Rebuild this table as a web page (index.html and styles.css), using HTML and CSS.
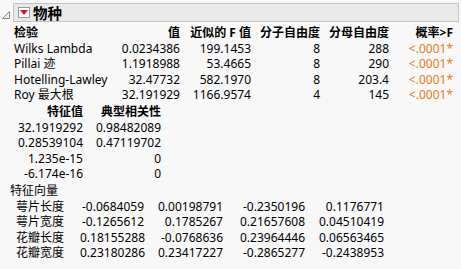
FILE: index.html
```html
<!DOCTYPE html>
<html lang="zh">
<head>
<meta charset="utf-8">
<link rel="stylesheet" href="styles.css">
</head>
<body>
<div class="report">
  <div class="outline">
    <svg class="disclose" width="10" height="10" viewBox="0 0 10 10"><polygon points="8.5,1.5 8.5,8.5 1.5,8.5" fill="none" stroke="#8a8a8a" stroke-width="1"/></svg>
    <div class="titlebar">
      <span class="redbtn"><svg width="8" height="5" viewBox="0 0 8 5"><polygon points="0,0 8,0 4,5" fill="#d8161c"/></svg></span>
      <span class="title">物种</span>
    </div>
  </div>

  <div class="tests">
    <div class="h left">检验</div><div class="h">值</div><div class="h">近似的 F 值</div><div class="h">分子自由度</div><div class="h">分母自由度</div><div class="h">概率&gt;F</div>
    <div class="left">Wilks Lambda</div><div>0.0234386</div><div>199.1453</div><div>8</div><div>288</div><div class="p">&lt;.0001*</div>
    <div class="left">Pillai 迹</div><div>1.1918988</div><div>53.4665</div><div>8</div><div>290</div><div class="p">&lt;.0001*</div>
    <div class="left">Hotelling-Lawley</div><div>32.47732</div><div>582.1970</div><div>8</div><div>203.4</div><div class="p">&lt;.0001*</div>
    <div class="left">Roy 最大根</div><div>32.191929</div><div>1166.9574</div><div>4</div><div>145</div><div class="p">&lt;.0001*</div>
  </div>

  <div class="eigen">
    <div class="h">特征值</div><div class="h">典型相关性</div>
    <div>32.1919292</div><div>0.98482089</div>
    <div>0.28539104</div><div>0.47119702</div>
    <div>1.235e-15</div><div>0</div>
    <div>-6.174e-16</div><div>0</div>
  </div>

  <div class="veclabel">特征向量</div>
  <div class="vectors">
    <div class="left">萼片长度</div><div>-0.0684059</div><div>0.00198791</div><div>-0.2350196</div><div>0.1176771</div>
    <div class="left">萼片宽度</div><div>-0.1265612</div><div>0.1785267</div><div>0.21657608</div><div>0.04510419</div>
    <div class="left">花瓣长度</div><div>0.18155288</div><div>-0.0768636</div><div>0.23964446</div><div>0.06563465</div>
    <div class="left">花瓣宽度</div><div>0.23180286</div><div>0.23417227</div><div>-0.2865277</div><div>-0.2438953</div>
  </div>
</div>
</body>
</html>
```
FILE: styles.css
```css
html, body {
  margin: 0;
  padding: 0;
  background: #f8f8f8;
}
body {
  font-family: "Noto Sans", "Noto Sans CJK SC", sans-serif;
  font-size: 12px;
  color: #000;
  width: 461px;
  height: 269px;
  overflow: hidden;
}
.report {
  padding-top: 3px;
}
.outline {
  display: flex;
  align-items: flex-start;
}
.disclose {
  margin: 7px 2px 0 1px;
  flex: none;
}
.titlebar {
  width: 444px;
  height: 17px;
  background: #e9e9e9;
  border: 1px solid #c4c4c4;
  display: flex;
  align-items: center;
}
.redbtn {
  width: 10px;
  height: 9px;
  margin-left: 4px;
  background: #fff;
  border: 1px solid #9a9a9a;
  display: flex;
  align-items: center;
  justify-content: center;
}
.title {
  margin-left: 3px;
  font-family: "Noto Sans CJK SC", sans-serif;
  font-weight: bold;
  font-size: 14.5px;
  line-height: 17px;
}
.tests, .eigen, .vectors {
  display: grid;
  line-height: 15.5px;
  white-space: nowrap;
}
.tests > div, .eigen > div, .vectors > div {
  text-align: right;
}
.tests > .left, .vectors > .left {
  text-align: left;
}
.h {
  font-weight: bold;
}
.tests {
  margin-top: 3px;
  margin-left: 14px;
  grid-template-columns: 105px 61px 71px 69px 69px 64px;
}
.p {
  color: #ea7a16;
}
.eigen {
  margin-top: 1.5px;
  margin-left: 14px;
  grid-template-columns: 69px 78px;
}
.veclabel {
  margin-left: 10px;
  line-height: 16px;
  margin-top: 1px;
}
.vectors {
  margin-top: 0;
  margin-left: 16px;
  grid-template-columns: 64px 64px 79px 82px 79px;
}
```
